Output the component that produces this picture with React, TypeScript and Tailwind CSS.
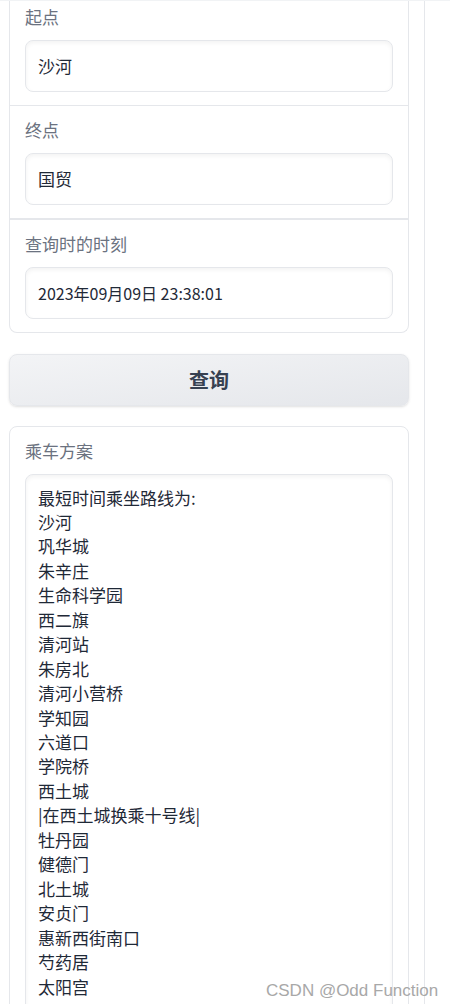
import React from "react";

const font = { fontFamily: '"Noto Sans CJK SC", "Noto Sans", sans-serif' };

const route = [
  "最短时间乘坐路线为:",
  "沙河",
  "巩华城",
  "朱辛庄",
  "生命科学园",
  "西二旗",
  "清河站",
  "朱房北",
  "清河小营桥",
  "学知园",
  "六道口",
  "学院桥",
  "西土城",
  "|在西土城换乘十号线|",
  "牡丹园",
  "健德门",
  "北土城",
  "安贞门",
  "惠新西街南口",
  "芍药居",
  "太阳宫",
];

function Field({ label, value, first, small }: { label: string; value: string; first?: boolean; small?: boolean }) {
  return (
    <div className={`px-[15px] pb-[13px] ${first ? "pt-[4px]" : "pt-[12px]"}`}>
      <div className="h-[24px] leading-[24px] text-[17px] text-[#6b7280]">{label}</div>
      <div className="mt-[11px] h-[52px] rounded-lg border border-[#e5e7eb] bg-white shadow-[inset_0_2px_4px_rgba(0,0,0,0.05)] px-[12px] flex items-center">
        <span className={`${small ? "text-[16px]" : "text-[17px]"} text-[#1f2937]`}>{value}</span>
      </div>
    </div>
  );
}

export default function App() {
  return (
    <div className="h-[1004px] overflow-hidden bg-white border-t border-[#f1f3f5] relative" style={font}>
      <div className="flex h-full">
        <div className="w-[425px] border-r border-[#e5e7eb] pl-[9px] pr-[15px]">
          <div className="w-[400px] border-x border-b border-[#e5e7eb] rounded-b-lg bg-white">
            <Field label="起点" value="沙河" first />
            <div className="h-px bg-[#e5e7eb]" />
            <Field label="终点" value="国贸" />
            <div className="h-[1.5px] bg-[#e5e7eb]" />
            <Field label="查询时的时刻" value="2023年09月09日 23:38:01" small />
          </div>

          <button className="mt-[21px] w-[400px] h-[52px] rounded-lg border border-[#e5e7eb] bg-gradient-to-br from-[#f3f4f6] to-[#e5e7eb] shadow-sm text-[20px] font-bold text-[#374151]">
            查询
          </button>

          <div className="mt-[20px] w-[400px] border border-[#e5e7eb] rounded-lg bg-white px-[15px] pt-[12px]">
            <div className="h-[24px] leading-[24px] text-[17px] text-[#6b7280]">乘车方案</div>
            <div className="mt-[11px] rounded-lg border border-[#e5e7eb] shadow-[inset_0_2px_4px_rgba(0,0,0,0.05)] px-[12px] pt-[11px] pb-[200px]">
              {route.map((s, i) => (
                <div key={i} className="text-[17px] leading-[24.45px] text-[#1f2937]">
                  {s}
                </div>
              ))}
            </div>
          </div>
        </div>
        <div className="flex-1" />
      </div>
      <div
        className="absolute left-[266px] top-[977px] text-[17px] text-[#a8a8a8]"
        style={{ fontFamily: '"Liberation Sans", Arial, sans-serif' }}
      >
        CSDN @Odd Function
      </div>
    </div>
  );
}
